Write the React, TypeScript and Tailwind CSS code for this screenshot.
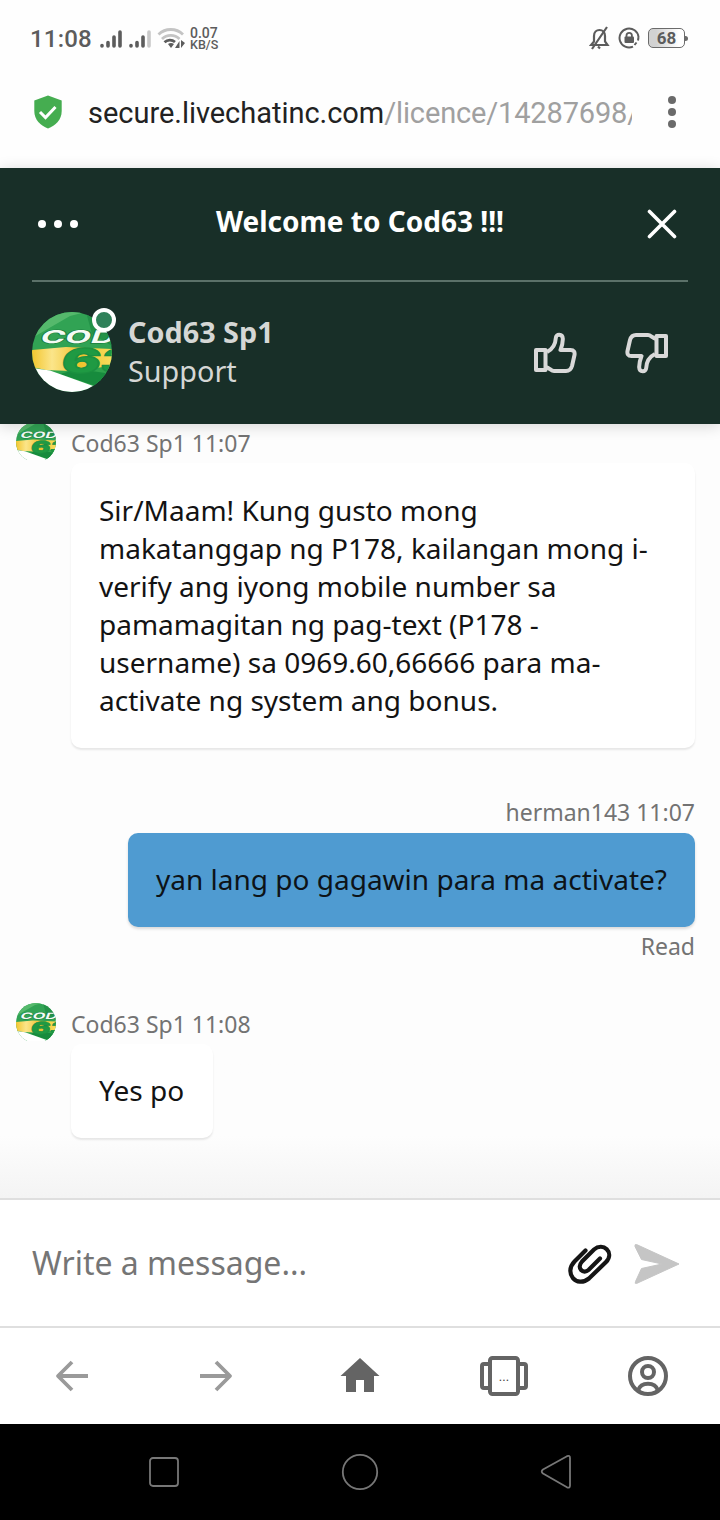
import React from "react";

type AvatarProps = {
  id: string;
  className?: string;
};

const Avatar: React.FC<AvatarProps> = ({ id, className }) => (
  <svg viewBox="0 0 80 80" className={className}>
    <defs>
      <clipPath id={`${id}-clip`}>
        <circle cx="40" cy="40" r="40" />
      </clipPath>
      <linearGradient id={`${id}-band`} x1="0" x2="1">
        <stop offset="0" stopColor="#f3c62f" />
        <stop offset="0.25" stopColor="#fbe58a" />
        <stop offset="0.6" stopColor="#f0c22c" />
        <stop offset="1" stopColor="#f8dc5c" />
      </linearGradient>
    </defs>
    <g clipPath={`url(#${id}-clip)`}>
      <rect width="80" height="80" fill="#31a354" />
      <path d="M0 26 L38 4 L54 0 L0 0Z" fill="#55b96c" />
      <path d="M54 0 L80 0 L80 34 L60 22Z" fill="#239248" />
      <path d="M0 38 L34 35 L80 37 L80 56 L30 62 L0 56Z" fill={`url(#${id}-band)`} />
      <path d="M0 55 L14 58 L38 59 L80 54 L80 80 L60 76Z" fill="#2fa34d" />
      <path d="M28 62 L46 57 L80 62 L80 72 L64 74Z" fill="#178b3d" />
      <path d="M0 56 L18 58.500 L64 75 L60 80 L0 80Z" fill="#ffffff" />
      <g transform="translate(7 31) skewX(-20) scale(1.900 1)">
        <text
          fontFamily="Inter, sans-serif"
          fontSize="17.500"
          fontWeight="700"
          fill="#f4fbf5"
          stroke="#1a7f3f"
          strokeWidth="1.400"
          paintOrder="stroke"
        >
          COD
        </text>
      </g>
      <g transform="translate(28 61) skewX(-10) scale(1.700 1)">
        <text
          fontFamily="Inter, sans-serif"
          fontSize="34"
          fontWeight="900"
          fill="#1f9a43"
          stroke="#1b9040"
          strokeWidth="1.200"
        >
          63
        </text>
      </g>
    </g>
  </svg>
);

const StatusBar = () => (
  <div className="flex h-[76px] items-center pl-[30px] pr-[32px] pt-[1px] font-[Roboto,sans-serif] text-[#5c5c5c]">
    <span className="w-[68px] text-[24px] font-medium leading-none tracking-[0.2px]">
      11:08
    </span>
    <svg width="90" height="28" viewBox="98 25 90 28">
      <g stroke="#5c5c5c" strokeWidth="3.6" strokeLinecap="round">
        <path d="M102 45.5v.5M108 42.5v3.5M114 37v9M120 32v14" />
        <path d="M131 45.5v.5M137 42.5v3.5M143 37v9" />
        <path d="M149 32v14" stroke="#c9c9c9" />
      </g>
      <g fill="none" strokeWidth="2.8">
        <path d="M158.500 34.500a17.500 17.500 0 0 1 24.500 0" stroke="#c4c4c4" />
        <path d="M162 39a12.500 12.500 0 0 1 17.500 0" stroke="#c4c4c4" />
        <path d="M164.500 42.300a8 8 0 0 1 10.500-.300" stroke="#5c5c5c" />
      </g>
      <path d="M168 44q3-2 6 0l-3 4zM179.500 41v7h-4.500zM181 40v8l4-5z" fill="#5c5c5c" />
    </svg>
    <div className="ml-[2px] flex flex-col text-[14px] font-medium leading-[12px]">
      <span>0.07</span>
      <span className="text-[12.500px]">KB/S</span>
    </div>
    <div className="ml-auto flex items-center gap-[8px] pb-[1px]">
      <svg width="21" height="24" viewBox="0 0 21 24" fill="none" stroke="#5c5c5c" strokeWidth="2.200">
        <path d="M2 19h16.500l-2.500-3.500V10c0-4-2.500-6-5.500-6S5 6 5 10v5.500z" />
        <path d="M9 20.500l2 2M18 1L3 23" />
      </svg>
      <svg width="22" height="24" viewBox="0 0 22 24">
        <path
          d="M20.500 11A9.500 9.500 0 1 0 15 20.600M20.500 11l-.500 3.500M18.500 16.500l-2 2.500"
          fill="none"
          stroke="#5c5c5c"
          strokeWidth="2"
        />
        <rect x="6.500" y="10.500" width="9.500" height="6.500" rx="1" fill="#5c5c5c" />
        <path d="M8.500 11V9.500a2.700 2.700 0 0 1 5.400 0V11" fill="none" stroke="#5c5c5c" strokeWidth="1.800" />
      </svg>
      <div className="flex items-center">
        <div className="flex h-[20px] w-[37px] items-center justify-center rounded-[5px] border-[1.500px] border-[#6b6b6b] bg-linear-to-r from-[#d2d2d2] from-20% to-white to-85% text-[17px] font-bold leading-none">
          68
        </div>
        <div className="h-[5px] w-[3px] rounded-r bg-[#6b6b6b]" />
      </div>
    </div>
  </div>
);

const AddressBar = () => (
  <div className="flex h-[92px] items-center pb-[20px] pl-[34px] pr-[44px]">
    <svg width="28" height="34" viewBox="0 0 28 34">
      <path
        d="M14 .500L27.700 5.500V16C27.700 25 21.500 30.500 14 33.500C6.500 30.500.300 25 .300 16V5.500Z"
        fill="#45ad50"
      />
      <path d="M6 17l5.500 5.500L21.500 12" fill="none" stroke="#fff" strokeWidth="3" />
    </svg>
    <div className="ml-[26px] mt-[1px] w-[544px] overflow-hidden whitespace-nowrap font-[Roboto,sans-serif] text-[29px] leading-[40px] text-[#a0a0a0]">
      <span className="tracking-[-0.030px] text-[#222222]">secure.livechatinc.com</span>
      <span className="tracking-[-0.150px]">/licence/14287698/</span>
    </div>
    <div className="ml-auto flex flex-col gap-[4px]">
      <i className="size-[8px] rounded-full bg-[#6a6a6a]" />
      <i className="size-[8px] rounded-full bg-[#6a6a6a]" />
      <i className="size-[8px] rounded-full bg-[#6a6a6a]" />
    </div>
  </div>
);

const thumbPath =
  "M14 20C20 17 22.500 12 22.800 6C23 1.500 29.500 1.500 29.800 6.500C30 10.500 29 14 27.500 18H37.500C41 18 42 20 41.500 23L39 34C38 37.500 36.500 39 33 39H21C18 39 17 36 12.500 35";

const ChatHeader = () => (
  <div className="relative z-10 h-[256px] bg-[#182f28] px-[32px] shadow-[0_2px_14px_rgba(0,0,0,0.16)]">
    <div className="flex h-[114px] items-center justify-between border-b-2 border-[#5b7169] pl-[6px] pr-[11px]">
      <div className="flex w-[41px] gap-[8px]">
        <i className="size-[8px] rounded-full bg-white" />
        <i className="size-[8px] rounded-full bg-white" />
        <i className="size-[8px] rounded-full bg-white" />
      </div>
      <h1 className="mr-[6px] pb-[6px] text-[28px] font-bold leading-[36px] text-white">
        Welcome to Cod63 !!!
      </h1>
      <svg width="30" height="30" viewBox="0 0 30 30" stroke="#fff" strokeWidth="3.600" strokeLinecap="round">
        <path d="M2.500 2.500l25 25M27.500 2.500l-25 25" />
      </svg>
    </div>
    <div className="flex h-[140px] items-center text-[#d5d7d5]">
      <div className="relative size-[80px]">
        <Avatar id="agent" className="size-[80px]" />
        <i className="absolute -right-[4px] -top-[4px] size-[24px] rounded-full border-[4px] border-white bg-[#2f8159]" />
      </div>
      <div className="ml-[16px] pb-[2px]">
        <div className="text-[28.800px] font-bold leading-[39px]">Cod63 Sp1</div>
        <div className="text-[28.800px] leading-[39px]">Support</div>
      </div>
      <div className="ml-auto mr-[19px] flex gap-[48px] pt-[2px]">
        <svg width="44" height="42" viewBox="0 0 44 42" fill="none" stroke="#d9d9d9" strokeWidth="4" strokeLinejoin="round">
          <path d={thumbPath} />
          <rect x="3" y="18" width="9.500" height="20" />
        </svg>
        <svg width="44" height="42" viewBox="0 0 44 42" fill="none" stroke="#d9d9d9" strokeWidth="4" strokeLinejoin="round">
          <g transform="rotate(180 22 21)">
            <path d={thumbPath} />
            <rect x="3" y="18" width="9.500" height="20" />
          </g>
        </svg>
      </div>
    </div>
  </div>
);

type AgentMessageProps = {
  id: string;
  time: string;
  children: React.ReactNode;
};

const AgentMessage: React.FC<AgentMessageProps> = ({ id, time, children }) => (
  <div className="flex items-start pl-[16px] pr-[25px]">
    <div className="mr-[15px] h-[38px] w-[40px] shrink-0 overflow-hidden">
      <Avatar id={id} className="size-[40px]" />
    </div>
    <div className="flex flex-1 flex-col items-start">
      <div className="mb-[5px] h-[36px] text-[23px] leading-[43px] text-[#737373]">
        Cod63 Sp1 {time}
      </div>
      <div className="rounded-[10px] bg-white p-[28px] text-[28px] leading-[38px] text-[#131313] shadow-[0_2px_2px_rgba(0,0,0,0.09)]">
        {children}
      </div>
    </div>
  </div>
);

const Messages = () => (
  <div className="h-[774px] overflow-hidden bg-linear-to-b from-[#fdfdfd] from-92% to-[#f4f4f4]">
    <div className="-mt-[2px]">
      <AgentMessage id="first" time="11:07">
        <div className="h-[229px] w-[568px] whitespace-nowrap">
          Sir/Maam! Kung gusto mong
          <br />
          makatanggap ng P178, kailangan mong i-
          <br />
          verify ang iyong mobile number sa
          <br />
          pamamagitan ng pag-text (P178 -
          <br />
          username) sa 0969.60,66666 para ma-
          <br />
          activate ng system ang bonus.
        </div>
      </AgentMessage>
    </div>
    <div className="mt-[49px] flex flex-col items-end pr-[25px] text-[23px] text-[#737373]">
      <div className="h-[36px] leading-[30px]">herman143 11:07</div>
      <div className="w-[567px] whitespace-nowrap rounded-[10px] bg-[#4f9bd1] px-[28px] pb-[29px] pt-[27px] text-[28px] leading-[38px] text-[#0d1318] shadow-[0_2px_3px_rgba(0,0,0,0.14)]">
        yan lang po gagawin para ma activate?
      </div>
      <div className="h-[38px] leading-[38px]">Read</div>
    </div>
    <div className="mt-[38px]">
      <AgentMessage id="second" time="11:08">
        <div className="-mt-[1px] mb-[1px] w-[86px] whitespace-nowrap">Yes po</div>
      </AgentMessage>
    </div>
  </div>
);

const Composer = () => (
  <div className="flex h-[130px] items-center border-y-2 border-[#dfdfdf] bg-white pl-[32px] pr-[39px] pt-[2px]">
    <span className="flex-1 pb-[2px] text-[32px] leading-[40px] text-[#757575]">
      Write a message...
    </span>
    <svg width="46" height="42" viewBox="0 0 46 42" fill="none" stroke="#151515" strokeWidth="4.200" strokeLinecap="round" className="mt-[2px]">
      <path d="M18.500 6.500L7.500 17.500C-3.500 29 9.500 44.500 22 34.500L39 18C48 8.500 36 -2.500 27 5.500L15 17.500C9 24.500 16.500 30.500 21.500 26L33 14.500" />
    </svg>
    <svg width="48" height="44" viewBox="0 0 48 44" className="ml-[20px]">
      <path d="M3.500 2.500L46 22L3.500 41.500Q1.500 42 2.500 39.500L8.500 26.500L29 22L8.500 17.500L2 4.500Q1.500 2 3.500 2.500Z" fill="#c5c5c5" stroke="#c5c5c5" strokeWidth="1" strokeLinejoin="round" />
    </svg>
  </div>
);

const BrowserToolbar = () => (
  <div className="grid h-[96px] grid-cols-5 place-items-center bg-white">
    <svg width="40" height="40" viewBox="0 0 40 40" fill="none" stroke="#9a9a9a" strokeWidth="3.800">
      <path d="M36 20H6M20 6L6 20L20 34" strokeLinejoin="round" />
    </svg>
    <svg width="40" height="40" viewBox="0 0 40 40" fill="none" stroke="#9a9a9a" strokeWidth="3.800">
      <path d="M4 20H34M20 6L34 20L20 34" strokeLinejoin="round" />
    </svg>
    <svg width="40" height="40" viewBox="0 0 40 40" fill="#646464">
      <path d="M20 2L39.500 20H34V36H24V24H16V36H6V20H.500Z" />
    </svg>
    <svg width="48" height="40" viewBox="0 0 48 40" fill="none" stroke="#646464" strokeWidth="4">
      <rect x="10" y="2" width="28" height="36" rx="2.500" />
      <path d="M9 8H4Q2 8 2 10V30Q2 32 4 32H9M39 8H44Q46 8 46 10V30Q46 32 44 32H39" />
      <text x="24" y="25" textAnchor="middle" fontSize="13" fontFamily="Roboto, sans-serif" fill="#444" stroke="none">
        ...
      </text>
    </svg>
    <svg width="40" height="40" viewBox="0 0 40 40" fill="none" stroke="#646464" strokeWidth="4">
      <circle cx="20" cy="20" r="18" />
      <circle cx="20" cy="16" r="6" />
      <path d="M10 34.500C13 25.500 27 25.500 30 34.500" />
    </svg>
  </div>
);

const NavigationBar = () => (
  <div className="flex h-[96px] items-center justify-between bg-black pl-[148px] pr-[148px]">
    <svg width="32" height="32" viewBox="0 0 32 32" fill="none" stroke="#777" strokeWidth="1.800">
      <rect x="2" y="2" width="28" height="28" rx="3" />
    </svg>
    <svg width="38" height="38" viewBox="0 0 38 38" fill="none" stroke="#777" strokeWidth="1.800">
      <circle cx="19" cy="19" r="17.200" />
    </svg>
    <svg width="32" height="36" viewBox="0 0 32 36" fill="none" stroke="#777" strokeWidth="1.800" strokeLinejoin="round">
      <path d="M27 2.200L3 15.500Q.500 17.500 3 19.500L27 33.300Q30 34.500 30 31.500V4Q30 1 27 2.200Z" />
    </svg>
  </div>
);

export default function App() {
  return (
    <div className="flex h-[1520px] w-[720px] flex-col overflow-hidden bg-[#fefefe] font-['Noto_Sans',sans-serif]">
      <StatusBar />
      <AddressBar />
      <ChatHeader />
      <Messages />
      <Composer />
      <BrowserToolbar />
      <NavigationBar />
    </div>
  );
}
